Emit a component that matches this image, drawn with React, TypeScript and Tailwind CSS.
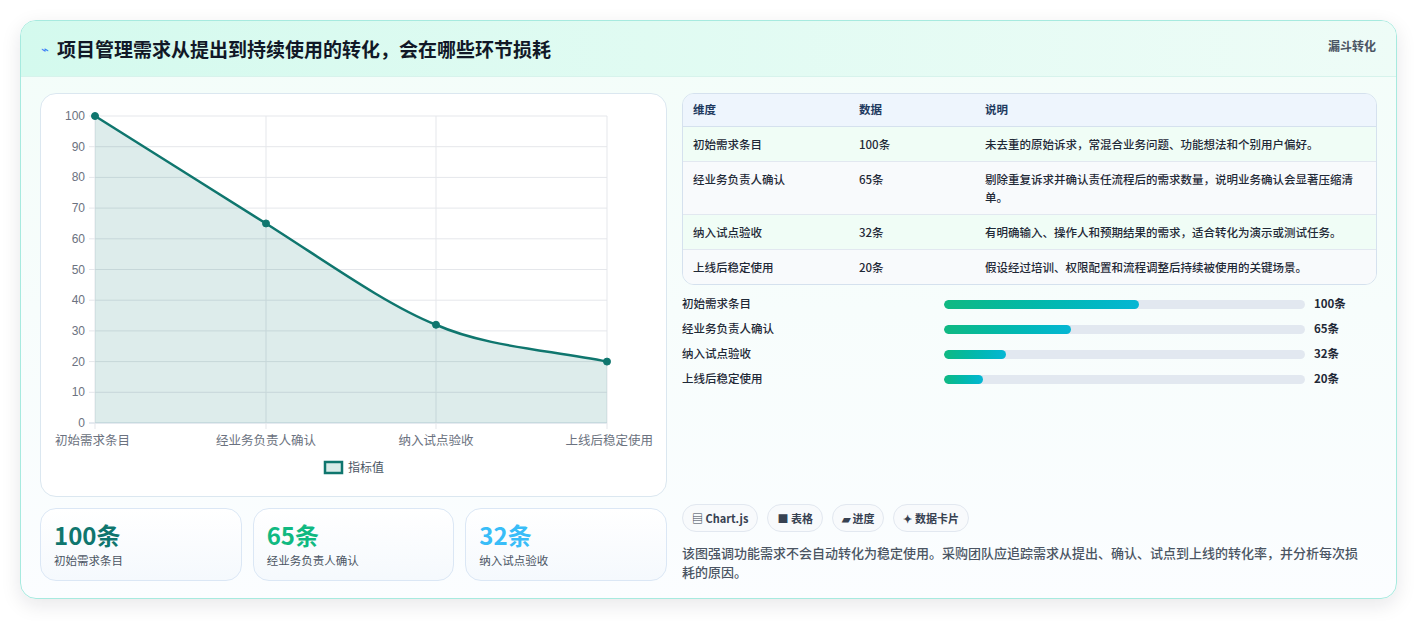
import React from "react";

const rows = [
  ["初始需求条目", "100条", "未去重的原始诉求，常混合业务问题、功能想法和个别用户偏好。"],
  ["经业务负责人确认", "65条", "剔除重复诉求并确认责任流程后的需求数量，说明业务确认会显著压缩清单。"],
  ["纳入试点验收", "32条", "有明确输入、操作人和预期结果的需求，适合转化为演示或测试任务。"],
  ["上线后稳定使用", "20条", "假设经过培训、权限配置和流程调整后持续被使用的关键场景。"],
];
const bars = [["初始需求条目", 100], ["经业务负责人确认", 65], ["纳入试点验收", 32], ["上线后稳定使用", 20]] as const;

function Chart() {
  const L = 54, R = 566, T = 22, B = 329;
  const y = (v: number) => B - (v / 100) * (B - T);
  const xs = [54, 225, 395, 566];
  const vs = [100, 65, 32, 20];
  const p = xs.map((x, i) => [x, y(vs[i])]);
  const line = `M${p[0][0]},${p[0][1]} C${p[0][0] + 57},${p[0][1] + 36} ${p[1][0] - 57},${p[1][1] - 36} ${p[1][0]},${p[1][1]} C${p[1][0] + 60},${p[1][1] + 38} ${p[2][0] - 50},${p[2][1] - 20} ${p[2][0]},${p[2][1]} C${p[2][0] + 50},${p[2][1] + 22} ${p[3][0] - 60},${p[3][1] - 12} ${p[3][0]},${p[3][1]}`;
  return (
    <svg width="627" height="403" className="block" style={{ fontFamily: "'Noto Sans CJK SC', 'Liberation Sans', sans-serif" }}>
      {Array.from({ length: 11 }, (_, i) => i * 10).map((v) => (
        <g key={v}>
          <line x1={L - 6} x2={R} y1={y(v)} y2={y(v)} stroke={v === 0 ? "#cbd5e1" : "#e5e7eb"} />
          <text x={L - 10} y={y(v) + 4} textAnchor="end" fontSize="12" fill="#6b7280" fontFamily="Liberation Sans, sans-serif">{v}</text>
        </g>
      ))}
      {xs.map((x) => <line key={x} x1={x} x2={x} y1={T} y2={B + 6} stroke="#e5e7eb" />)}
      <path d={`${line} L${R},${B} L${L},${B} Z`} fill="rgba(15,118,110,0.14)" />
      <path d={line} fill="none" stroke="#0f766e" strokeWidth="2.5" />
      {p.map(([a, b], i) => <circle key={i} cx={a} cy={b} r="3.5" fill="#0f766e" stroke="#0f766e" />)}
      {["初始需求条目", "经业务负责人确认", "纳入试点验收", "上线后稳定使用"].map((t, i) => (
        <text key={t} x={i === 0 ? 14 : i === 3 ? 612 : xs[i]} y={351} textAnchor={i === 0 ? "start" : i === 3 ? "end" : "middle"} fontSize="12.5" fill="#6b7280">{t}</text>
      ))}
      <rect x="284" y="368" width="17" height="11" fill="#d9ebe8" stroke="#0f766e" strokeWidth="2.5" />
      <text x="307" y="378" fontSize="12" fill="#4b5563">指标值</text>
    </svg>
  );
}

export default function App() {
  return (
    <div className="w-[1417px] h-[621px] bg-white p-5 pt-5" style={{ fontFamily: "'Noto Sans CJK SC', 'Liberation Sans', sans-serif" }}>
      <div className="w-[1377px] h-[579px] rounded-2xl border border-[#a7eadf] overflow-hidden shadow-[0_6px_20px_rgba(15,23,42,0.10)] bg-gradient-to-b from-[#f3fdf9] to-[#fbfdff] flex flex-col">
        <div className="h-[56px] shrink-0 flex items-start justify-between px-5 bg-gradient-to-r from-[#d4faee] to-[#eefcf7] border-b border-[#d7f3ec]">
          <div className="flex items-center gap-[8px] h-[56px]">
            <span className="text-[#3b82f6] text-[13px]">⌁</span>
            <span className="text-[19px] font-bold text-[#111827]">项目管理需求从提出到持续使用的转化，会在哪些环节损耗</span>
          </div>
          <span className="text-[12px] font-bold text-[#4b5563] mt-[16px]">漏斗转化</span>
        </div>
        <div className="flex gap-[15px] px-[19px] pt-[16px]">
          <div className="w-[627px] flex flex-col gap-[11px]">
            <div className="h-[404px] rounded-2xl border border-[#dbe7f0] bg-white"><Chart /></div>
            <div className="flex gap-[11px]">
              {[["100条", "text-[#0f766e]", "初始需求条目"], ["65条", "text-[#10b981]", "经业务负责人确认"], ["32条", "text-[#38bdf8]", "纳入试点验收"]].map(([v, c, l]) => (
                <div key={v} className="flex-1 h-[73px] rounded-2xl border border-[#dbe7f5] bg-gradient-to-b from-white to-[#f5f9fd] px-[13px] pt-[10px]">
                  <div className={`text-[24px] font-bold leading-[32px] ${c}`}>{v}</div>
                  <div className="text-[11.5px] text-[#4b5563] mt-[1px]">{l}</div>
                </div>
              ))}
            </div>
          </div>
          <div className="flex-1 flex flex-col">
            <div className="rounded-xl border border-[#d5e1ee] overflow-hidden text-[11.5px]">
              <div className="flex h-[33px] items-center bg-[#eef5fd] text-[#1e3a5f] font-bold border-b border-[#d5e1ee]">
                <div className="w-[176px] pl-[10px]">维度</div><div className="w-[126px]">数据</div><div className="flex-1">说明</div>
              </div>
              {rows.map((r, i) => (
                <div key={i} className={`flex items-start py-[8px] text-[#1f2937] ${i < 3 ? "border-b border-[#e2e8f0]" : ""} ${i % 2 ? "bg-[#f8fafc]" : "bg-[#f0fdf6]"}`}>
                  <div className="w-[176px] pl-[10px] font-medium leading-[18px]">{r[0]}</div>
                  <div className="w-[126px] font-medium leading-[18px]">{r[1]}</div>
                  <div className="flex-1 pr-4 leading-[18px] font-medium">{r[2]}</div>
                </div>
              ))}
            </div>
            <div className="flex flex-col gap-[7px] mt-[10px]">
              {bars.map(([l, v]) => (
                <div key={l} className="flex items-center h-[18px] text-[11.5px] font-medium text-[#1f2937]">
                  <div className="w-[262px]">{l}</div>
                  <div className="w-[361px] h-[9px] rounded-full bg-[#e2e8f0] overflow-hidden">
                    <div className="h-full rounded-full bg-gradient-to-r from-[#10b981] to-[#06b6d4]" style={{ width: `${v * 0.54}%` }} />
                  </div>
                  <div className="ml-[9px] font-bold">{v}条</div>
                </div>
              ))}
            </div>
            <div className="flex gap-[9px] mt-[116px] text-[11px] font-bold text-[#374151]">
              {["▤ Chart.js", "■ 表格", "▰ 进度", "✦ 数据卡片"].map((t) => (
                <span key={t} className="h-[28px] px-[9px] flex items-center rounded-full border border-[#e2e8f0] bg-[#f8fafc]">{t}</span>
              ))}
            </div>
            <p className="mt-[11px] pr-[14px] text-[13px] leading-[19px] text-[#4b5563] font-medium">该图强调功能需求不会自动转化为稳定使用。采购团队应追踪需求从提出、确认、试点到上线的转化率，并分析每次损耗的原因。</p>
          </div>
        </div>
      </div>
    </div>
  );
}
